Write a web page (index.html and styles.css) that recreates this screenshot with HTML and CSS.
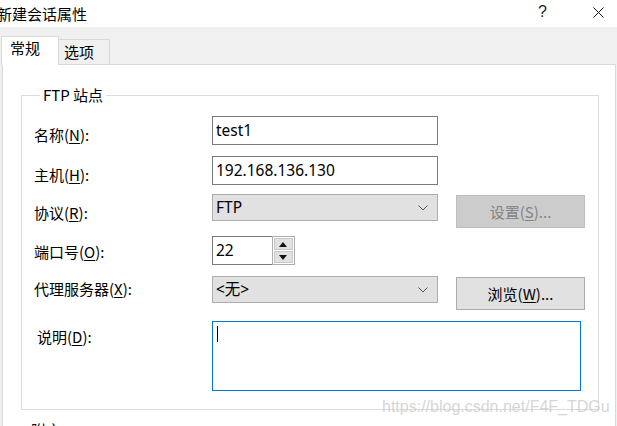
FILE: index.html
```html
<!DOCTYPE html>
<html lang="zh-CN">
<head>
    <meta charset="UTF-8">
    <title>新建会话属性</title>
    <link rel="stylesheet" href="styles.css">
</head>
<body>
    <div class="dialog">
        <div class="titlebar">
            <span class="title">新建会话属性</span>
            <span class="help">?</span>
            <svg class="close" width="11" height="11" viewBox="0 0 11 11">
                <path d="M0.5 0.5 L10.5 10.5 M10.5 0.5 L0.5 10.5" stroke="#111" stroke-width="1"/>
            </svg>
        </div>

        <div class="body">
            <div class="tabs">
                <div class="tab active">常规</div>
                <div class="tab">选项</div>
            </div>

            <div class="panel">
                <fieldset class="group">
                    <legend>FTP 站点</legend>
                    <div class="form">
                        <div class="label l-9">名称(<u>N</u>):</div>
                        <div class="input">test1</div>
                        <div></div>

                        <div class="label l-9">主机(<u>H</u>):</div>
                        <div class="input">192.168.136.130</div>
                        <div></div>

                        <div class="label l-9">协议(<u>R</u>):</div>
                        <div class="combo">
                            <span>FTP</span>
                            <svg class="chevron" width="10" height="6" viewBox="0 0 10 6"><path d="M0.5 0.5 L5 5 L9.5 0.5" fill="none" stroke="#555" stroke-width="1"/></svg>
                        </div>
                        <div class="button disabled">设置(<u>S</u>)...</div>

                        <div class="label l-6">端口号(<u>O</u>):</div>
                        <div class="spinner">
                            <div class="spin-text">22</div>
                            <div class="spin-btns">
                                <div class="spin-btn"><svg width="8" height="5" viewBox="0 0 8 5"><path d="M0 5 L4 0 L8 5 Z" fill="#111"/></svg></div>
                                <div class="spin-btn"><svg width="8" height="5" viewBox="0 0 8 5"><path d="M0 0 L8 0 L4 5 Z" fill="#111"/></svg></div>
                            </div>
                        </div>
                        <div></div>

                        <div class="label l-3">代理服务器(<u>X</u>):</div>
                        <div class="combo">
                            <span>&lt;无&gt;</span>
                            <svg class="chevron" width="10" height="6" viewBox="0 0 10 6"><path d="M0.5 0.5 L5 5 L9.5 0.5" fill="none" stroke="#555" stroke-width="1"/></svg>
                        </div>
                        <div class="button browse">浏览(<u>W</u>)...</div>

                        <div class="label l-6 desc-label">说明(<u>D</u>):</div>
                        <div class="textarea"><span class="caret"></span></div>
                        <div></div>
                    </div>
                </fieldset>
                <div class="next-group">附言</div>
                <div class="watermark">https://blog.csdn.net/F4F_TDGu</div>
            </div>
        </div>
    </div>
</body>
</html>
```

FILE: styles.css
```css
body {
    margin: 0;
    font-family: "Noto Sans CJK SC", "Noto Sans", sans-serif;
    font-size: 15px;
    color: #000;
    background: #f0f0f0;
    overflow: hidden;
}

.dialog {
    width: 617px;
    height: 426px;
    overflow: hidden;
}

.titlebar {
    height: 27px;
    background: #fff;
    display: flex;
    align-items: center;
    position: relative;
}

.title {
    margin-left: -3px;
    line-height: 20px;
}

.help {
    position: absolute;
    left: 538px;
    top: 3px;
    font-family: "Liberation Sans", sans-serif;
    font-size: 16px;
    color: #222;
}

.close {
    position: absolute;
    left: 593px;
    top: 7px;
}

.body {
    background: #f0f0f0;
    padding-top: 10px;
}

.tabs {
    display: flex;
    align-items: flex-end;
    padding-left: 1px;
    height: 27px;
    position: relative;
    z-index: 1;
}

.tab {
    height: 24px;
    width: 45px;
    padding-left: 5px;
    border: 1px solid #d9d9d9;
    border-bottom: none;
    border-left: none;
    background: #f0f0f0;
    line-height: 24px;
    box-sizing: content-box;
}

.tab.active {
    height: 28px;
    width: 48px;
    padding-left: 8px;
    border-left: 1px solid #d9d9d9;
    background: #fff;
    line-height: 22px;
    margin-bottom: -1px;
}

.panel {
    margin-left: 2px;
    width: 612px;
    height: 400px;
    background: #fff;
    border: 1px solid #d9d9d9;
    position: relative;
}

.group {
    margin: 20px 16px 0 18px;
    padding: 11px 0 18px 12px;
    border: 1px solid #dcdcdc;
    min-width: 0;
}

.group legend {
    padding: 0 3px;
    margin-left: 6px;
    line-height: 20px;
}

.form {
    display: grid;
    grid-template-columns: 160px 226px 129px;
    grid-template-rows: 40px 38px 42px 40px 45px 70px;
    column-gap: 18px;
    align-items: start;
}

.label {
    line-height: 20px;
}

.l-9 { padding-top: 9px; }
.l-6 { padding-top: 6px; }
.l-3 { padding-top: 3px; }

.desc-label {
    padding-left: 3px;
}

.input {
    height: 27px;
    border: 1px solid #7a7a7a;
    padding-left: 3px;
    line-height: 26px;
    font-family: "Noto Sans", sans-serif;
    font-size: 15.5px;
}

.combo {
    height: 25px;
    border: 1px solid #adadad;
    background: #e1e1e1;
    padding-left: 3px;
    padding-right: 9px;
    line-height: 25px;
    display: flex;
    justify-content: space-between;
    align-items: center;
    font-family: "Noto Sans", "Noto Sans CJK SC", sans-serif;
    font-size: 15.5px;
}

.button {
    margin-top: 1px;
    height: 31px;
    border: 1px solid #adadad;
    background: #e1e1e1;
    text-align: center;
    line-height: 31px;
}

.button.disabled {
    background: #cccccc;
    border-color: #bfbfbf;
    color: #838383;
}

.spinner {
    display: flex;
    width: 83px;
    height: 29px;
}

.spin-text {
    width: 58px;
    border: 1px solid #7a7a7a;
    border-right: none;
    padding-left: 3px;
    line-height: 27px;
    font-family: "Noto Sans", sans-serif;
    font-size: 15.5px;
}

.spin-btns {
    width: 20px;
    border: 1px solid #adadad;
    display: flex;
    flex-direction: column;
    padding: 1px;
    gap: 1px;
    background: #fff;
}

.spin-btn {
    flex: 1;
    background: #e1e1e1;
    border: 1px solid #c9c9c9;
    display: flex;
    align-items: center;
    justify-content: center;
}

.textarea {
    width: 367px;
    height: 68px;
    border: 1px solid #0078d7;
    position: relative;
}

.caret {
    position: absolute;
    left: 4px;
    top: 4px;
    width: 1px;
    height: 16px;
    background: #000;
}

u {
    text-decoration: underline;
    text-underline-offset: 2px;
}

.next-group {
    margin-left: 28px;
    margin-top: 10px;
    line-height: 20px;
}

.watermark {
    position: absolute;
    left: 379px;
    top: 333px;
    white-space: nowrap;
    font-family: "Liberation Sans", sans-serif;
    font-size: 16px;
    color: rgba(200, 200, 200, 0.75);
}
```
